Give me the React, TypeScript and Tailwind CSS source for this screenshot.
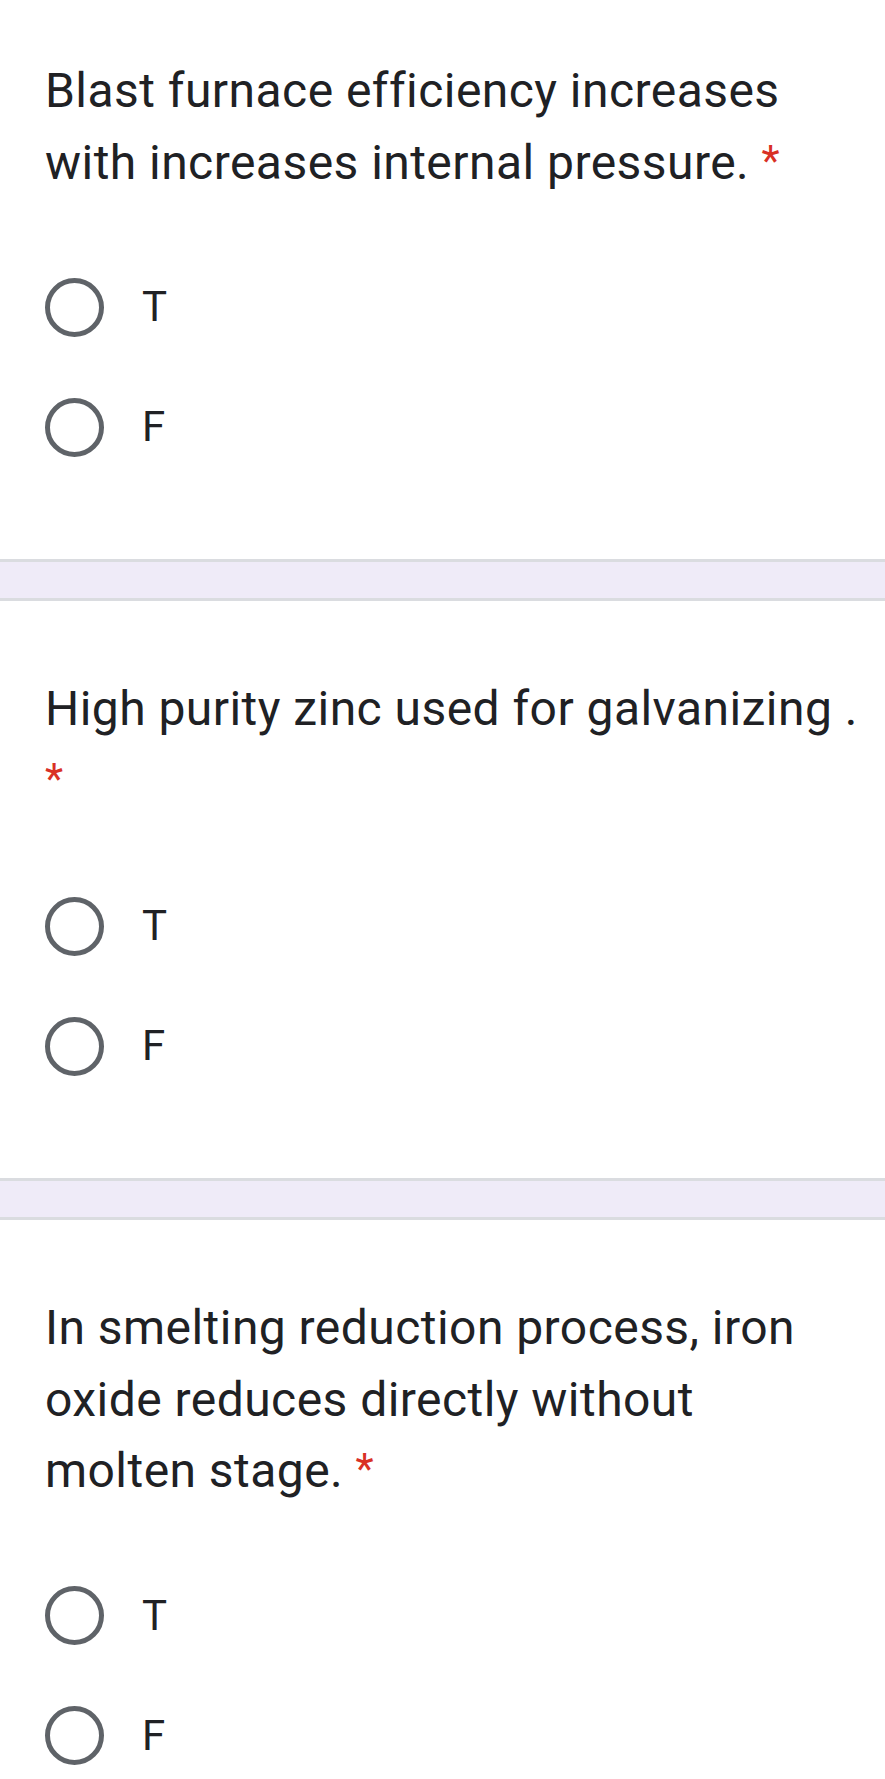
import React from 'react';

interface Question {
  id: string;
  lines: string[];
  options: string[];
}

// lines are broken where the form breaks them on this phone width
const questions: Question[] = [
  { id: 'q1', lines: ['Blast furnace efficiency increases', 'with increases internal pressure.'], options: ['T', 'F'] },
  { id: 'q2', lines: ['High purity zinc used for galvanizing .'], options: ['T', 'F'] },
  { id: 'q3', lines: ['In smelting reduction process, iron', 'oxide reduces directly without', 'molten stage.'], options: ['T', 'F'] },
];

const Radio: React.FC<{ label: string }> = ({ label }) => (
  <label className="flex items-center h-[120px] cursor-pointer">
    <span className="w-[59px] h-[59px] rounded-full border-[5px] border-[#5f6368] shrink-0" />
    <span className="ml-[38px] text-[42px] leading-none text-[#202124]">{label}</span>
  </label>
);

const Separator = () => <div className="h-[42px] bg-[#efebf8] border-y-[3px] border-[#dadce0]" />;

export default function App() {
  return (
    <div className="h-[1779px] overflow-hidden bg-white" style={{ fontFamily: 'Roboto, "Open Sans", sans-serif' }}>
      {questions.map((q, i) => (
        <React.Fragment key={q.id}>
          {i > 0 && <Separator />}
          <div className={`pl-[45px] pr-[20px] pb-[72px] ${i === 0 ? 'pt-[55px]' : 'pt-[72px]'}`}>
            <div className="text-[48px] leading-[71.5px] tracking-[0.45px] text-[#202124]">
              {q.lines.map((l, j) => (
                <React.Fragment key={j}>
                  {j > 0 && <br />}
                  {l}
                </React.Fragment>
              ))}
              {q.id === 'q2' && <br />}
              {q.id !== 'q2' && ' '}
              <span className="text-[42px] leading-none align-[4px] text-[#d93025]">*</span>
            </div>
            <div className={i === 1 ? 'mt-[50px]' : 'mt-[49px]'}>
              {q.options.map(o => (
                <Radio key={o} label={o} />
              ))}
            </div>
          </div>
        </React.Fragment>
      ))}
    </div>
  );
}
